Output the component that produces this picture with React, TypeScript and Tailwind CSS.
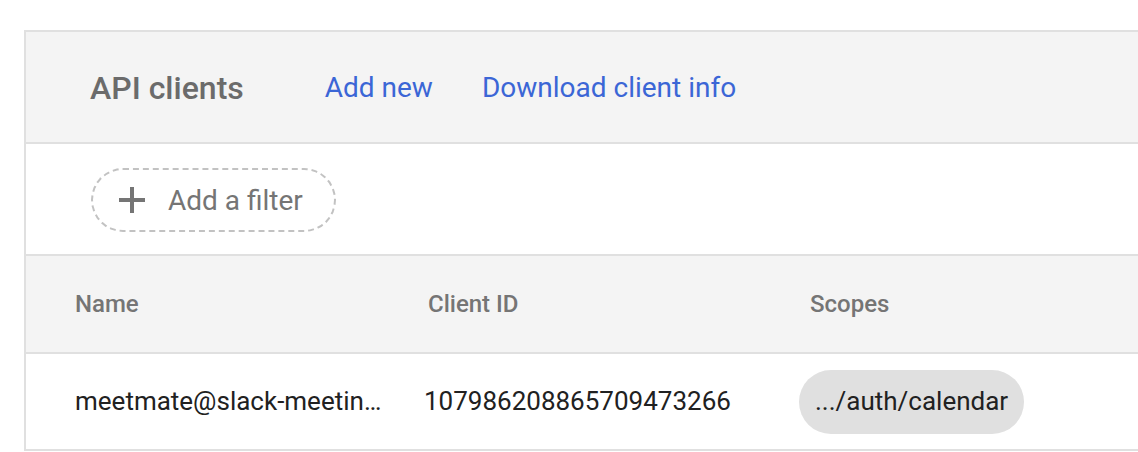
import React from 'react';

const font = { fontFamily: 'Roboto, "Noto Sans", sans-serif' };

const PlusIcon = () => (
  <svg width="28" height="28" viewBox="0 0 28 28" className="shrink-0">
    <path d="M14 1v26M1 14h26" stroke="#757575" strokeWidth="4" fill="none" />
  </svg>
);

export default function App() {
  return (
    <div className="h-[452px] w-[1138px] overflow-hidden bg-white pt-[30px] pl-[24px]" style={font}>
      <div className="border-y-2 border-l-2 border-[#e0e0e0] w-[1200px]">
        {/* header */}
        <div className="flex h-[112px] items-center bg-[#f4f4f4] border-b-2 border-[#e0e0e0] pt-[2px]">
          <h2 className="ml-[64px] mr-[81px] text-[32px] font-medium text-[#6b6b6b]">API clients</h2>
          <a className="text-[28px] text-[#3b66d6] cursor-pointer">Add new</a>
          <a className="ml-[49px] text-[28px] text-[#3b66d6] cursor-pointer">Download client info</a>
        </div>

        {/* filter */}
        <div className="flex h-[112px] items-center border-b-2 border-[#e0e0e0] pt-[2px]">
          <button className="ml-[65px] flex h-[64px] w-[245px] items-center rounded-full border-2 border-dashed border-[#c2c2c2] pl-[25px]">
            <PlusIcon />
            <span className="ml-[22px] pt-[2px] text-[28px] text-[#757575]">Add a filter</span>
          </button>
        </div>

        {/* table head */}
        <div className="grid h-[98px] grid-cols-[349px_375px_1fr] items-center bg-[#f4f4f4] border-b-2 border-[#e0e0e0] pl-[49px] text-[24px] font-medium text-[#757575]">
          <div>Name</div>
          <div className="pl-[4px]">Client ID</div>
          <div className="pl-[11px]">Scopes</div>
        </div>

        {/* row */}
        <div className="grid h-[95px] grid-cols-[349px_375px_1fr] items-center pl-[49px] text-[26px] text-[#212121]">
          <div className="truncate">meetmate@slack-meetin…</div>
          <div>107986208865709473266</div>
          <div>
            <span className="inline-flex h-[64px] items-center rounded-full bg-[#e0e0e0] px-[16px]">.../auth/calendar</span>
          </div>
        </div>
      </div>
    </div>
  );
}
